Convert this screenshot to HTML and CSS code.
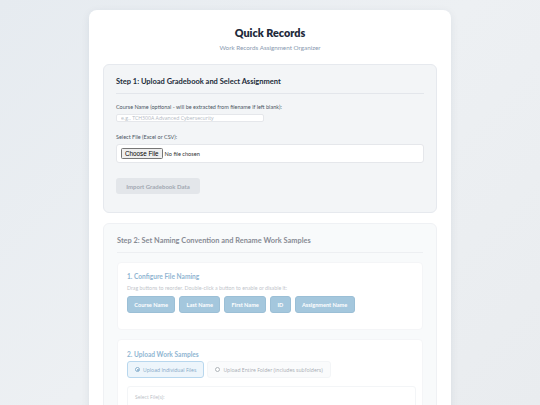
FILE: index.html
```html
<!DOCTYPE html>
<html>
<head>
<meta charset="utf-8">
<link rel="stylesheet" href="styles.css">
</head>
<body>
<div class="page">
  <div class="card">
    <h1 class="title">Quick Records</h1>
    <p class="subtitle">Work Records Assignment Organizer</p>

    <section class="step step1">
      <h2 class="step-title">Step 1: Upload Gradebook and Select Assignment</h2>
      <label class="label">Course Name (optional - will be extracted from filename if left blank):</label>
      <input class="text-input" type="text" placeholder="e.g., TCH300A Advanced Cybersecurity">
      <label class="label label-file">Select File (Excel or CSV):</label>
      <div class="file-box"><input class="file-input" type="file"></div>
      <button class="import-btn">Import Gradebook Data</button>
    </section>

    <section class="step step2">
      <h2 class="step-title">Step 2: Set Naming Convention and Rename Work Samples</h2>
      <div class="panel">
        <h3 class="panel-title">1. Configure File Naming</h3>
        <p class="panel-desc">Drag buttons to reorder. Double-click a button to enable or disable it:</p>
        <div class="chips">
          <span class="chip">Course Name</span>
          <span class="chip">Last Name</span>
          <span class="chip">First Name</span>
          <span class="chip">ID</span>
          <span class="chip">Assignment Name</span>
        </div>
      </div>
      <div class="panel panel2">
        <h3 class="panel-title">2. Upload Work Samples</h3>
        <div class="radios">
          <label class="radio active"><span class="dot on"></span>Upload Individual Files</label>
          <label class="radio"><span class="dot"></span>Upload Entire Folder (includes subfolders)</label>
        </div>
        <div class="subbox">
          <span class="sublabel">Select File(s):</span>
        </div>
      </div>
    </section>
  </div>
</div>
</body>
</html>
```

FILE: styles.css
```css
* { box-sizing: border-box; }
html, body { margin: 0; padding: 0; }
body {
  width: 540px;
  height: 405px;
  overflow: hidden;
  font-family: Lato, "Open Sans", sans-serif;
  background: linear-gradient(135deg, #e6ebf0 0%, #edf0f3 50%, #e9ecef 100%);
}
.page {
  display: flex;
  justify-content: center;
  padding-top: 10px;
}
.card {
  width: 362px;
  background: #ffffff;
  border-radius: 8px;
  padding: 15px 14px 0;
  box-shadow: 0 2px 8px rgba(30, 50, 80, 0.08);
  height: 420px;
}
.title {
  margin: 0;
  text-align: center;
  font-size: 10.8px;
  line-height: 16px;
  font-weight: 800;
  color: #1e2a3b;
}
.subtitle {
  margin: 3px 0 0;
  text-align: center;
  font-size: 6.3px;
  line-height: 8px;
  color: #8a9ab0;
}
.step {
  margin-top: 12px;
  border-radius: 6px;
  border: 1px solid #e6e9ee;
  background: #f3f5f7;
  padding: 11px 12px 18px;
}
.step-title {
  margin: 0;
  font-size: 7.5px;
  line-height: 11px;
  font-weight: 700;
  color: #222c3a;
  padding-bottom: 6px;
  border-bottom: 1px solid #e3e6eb;
}
.label {
  display: block;
  margin-top: 9px;
  font-size: 5.5px;
  line-height: 8px;
  color: #4b5563;
}
.text-input {
  display: block;
  margin-top: 3px;
  width: 148px;
  height: 8px;
  border: 1px solid #e5e7eb;
  border-radius: 2px;
  background: #fff;
  padding: 0 4px;
  font-family: "Open Sans", sans-serif;
  font-size: 5.2px;
  color: #333;
  outline: none;
}
.text-input::placeholder { color: #b3b9c3; }
.label-file { margin-top: 11px; }
.file-box {
  margin-top: 3px;
  height: 19px;
  background: #fff;
  border: 1px solid #e5e7eb;
  border-radius: 3px;
  display: flex;
  align-items: center;
  padding-left: 4px;
}
.file-input {
  font-family: Lato, sans-serif;
  font-size: 5.6px;
  color: #333;
}
.file-input::file-selector-button {
  font-family: "Liberation Sans", Arial, sans-serif;
  font-size: 6.3px;
  padding: 1px 3px;
  margin-right: 2px;
  border: 1px solid #767676;
  border-radius: 1.5px;
  background: #efefef;
  color: #000;
}
.import-btn {
  display: block;
  margin-top: 15px;
  width: 84px;
  height: 16px;
  border: none;
  border-radius: 3px;
  background: #e3e6ea;
  color: #a2a8b2;
  font-family: Lato, sans-serif;
  font-size: 6px;
  font-weight: 700;
  padding: 0;
}
.step2 {
  opacity: 0.62;
  margin-top: 10px;
  background: #f5f7fa;
  padding: 11px 13px 10px;
}
.step2 .step-title {
  font-size: 7.4px;
  color: #3a4352;
}
.panel {
  margin-top: 9px;
  background: #fff;
  border: 1px solid #eef0f3;
  border-radius: 4px;
  padding: 8px 9px 16px;
}
.panel2 { margin-top: 9px; padding-bottom: 20px; }
.panel-title {
  margin: 0;
  font-size: 6.6px;
  line-height: 10px;
  font-weight: 700;
  color: #4a88b6;
}
.panel2 .panel-title { margin-top: 1px; }
.panel-desc {
  margin: 3px 0 0;
  font-size: 5.3px;
  line-height: 8px;
  color: #9aa1aa;
}
.chips {
  display: flex;
  gap: 4px;
  margin-top: 4px;
}
.chip {
  height: 17px;
  display: flex;
  align-items: center;
  justify-content: center;
  background: #6ea6c9;
  border: 1px solid #5e98bd;
  border-radius: 3px;
  color: #fff;
  font-size: 5.6px;
  font-weight: 700;
  padding: 0 6.3px;
}
.radios {
  display: flex;
  gap: 3px;
  margin-top: 2px;
}
.radio {
  height: 17px;
  display: flex;
  align-items: center;
  gap: 3px;
  padding: 0 7px;
  border: 1px solid #eceff3;
  border-radius: 3px;
  background: #f8f9fb;
  font-family: "Open Sans", sans-serif;
  font-size: 5.1px;
  color: #6b7480;
}
.radio.active {
  background: #e3f0fa;
  border-color: #8ec0e4;
  color: #2f6fa0;
}
.dot {
  width: 5px;
  height: 5px;
  border-radius: 50%;
  border: 0.7px solid #7f8790;
  background: #fff;
  display: inline-block;
  position: relative;
}
.dot.on { border-color: #3f7fb0; }
.dot.on::after {
  content: "";
  position: absolute;
  left: 1px; top: 1px;
  width: 1.6px; height: 1.6px;
  border-radius: 50%;
  background: #3f7fb0;
}
.subbox {
  margin-top: 8px;
  width: 289px;
  height: 30px;
  border: 1px solid #eceff3;
  border-radius: 3px;
  padding: 7px 7px;
  font-size: 5px;
  line-height: 7px;
}
.sublabel {
  font-family: "Open Sans", sans-serif;
  font-size: 5px;
  color: #8a929c;
}
```
